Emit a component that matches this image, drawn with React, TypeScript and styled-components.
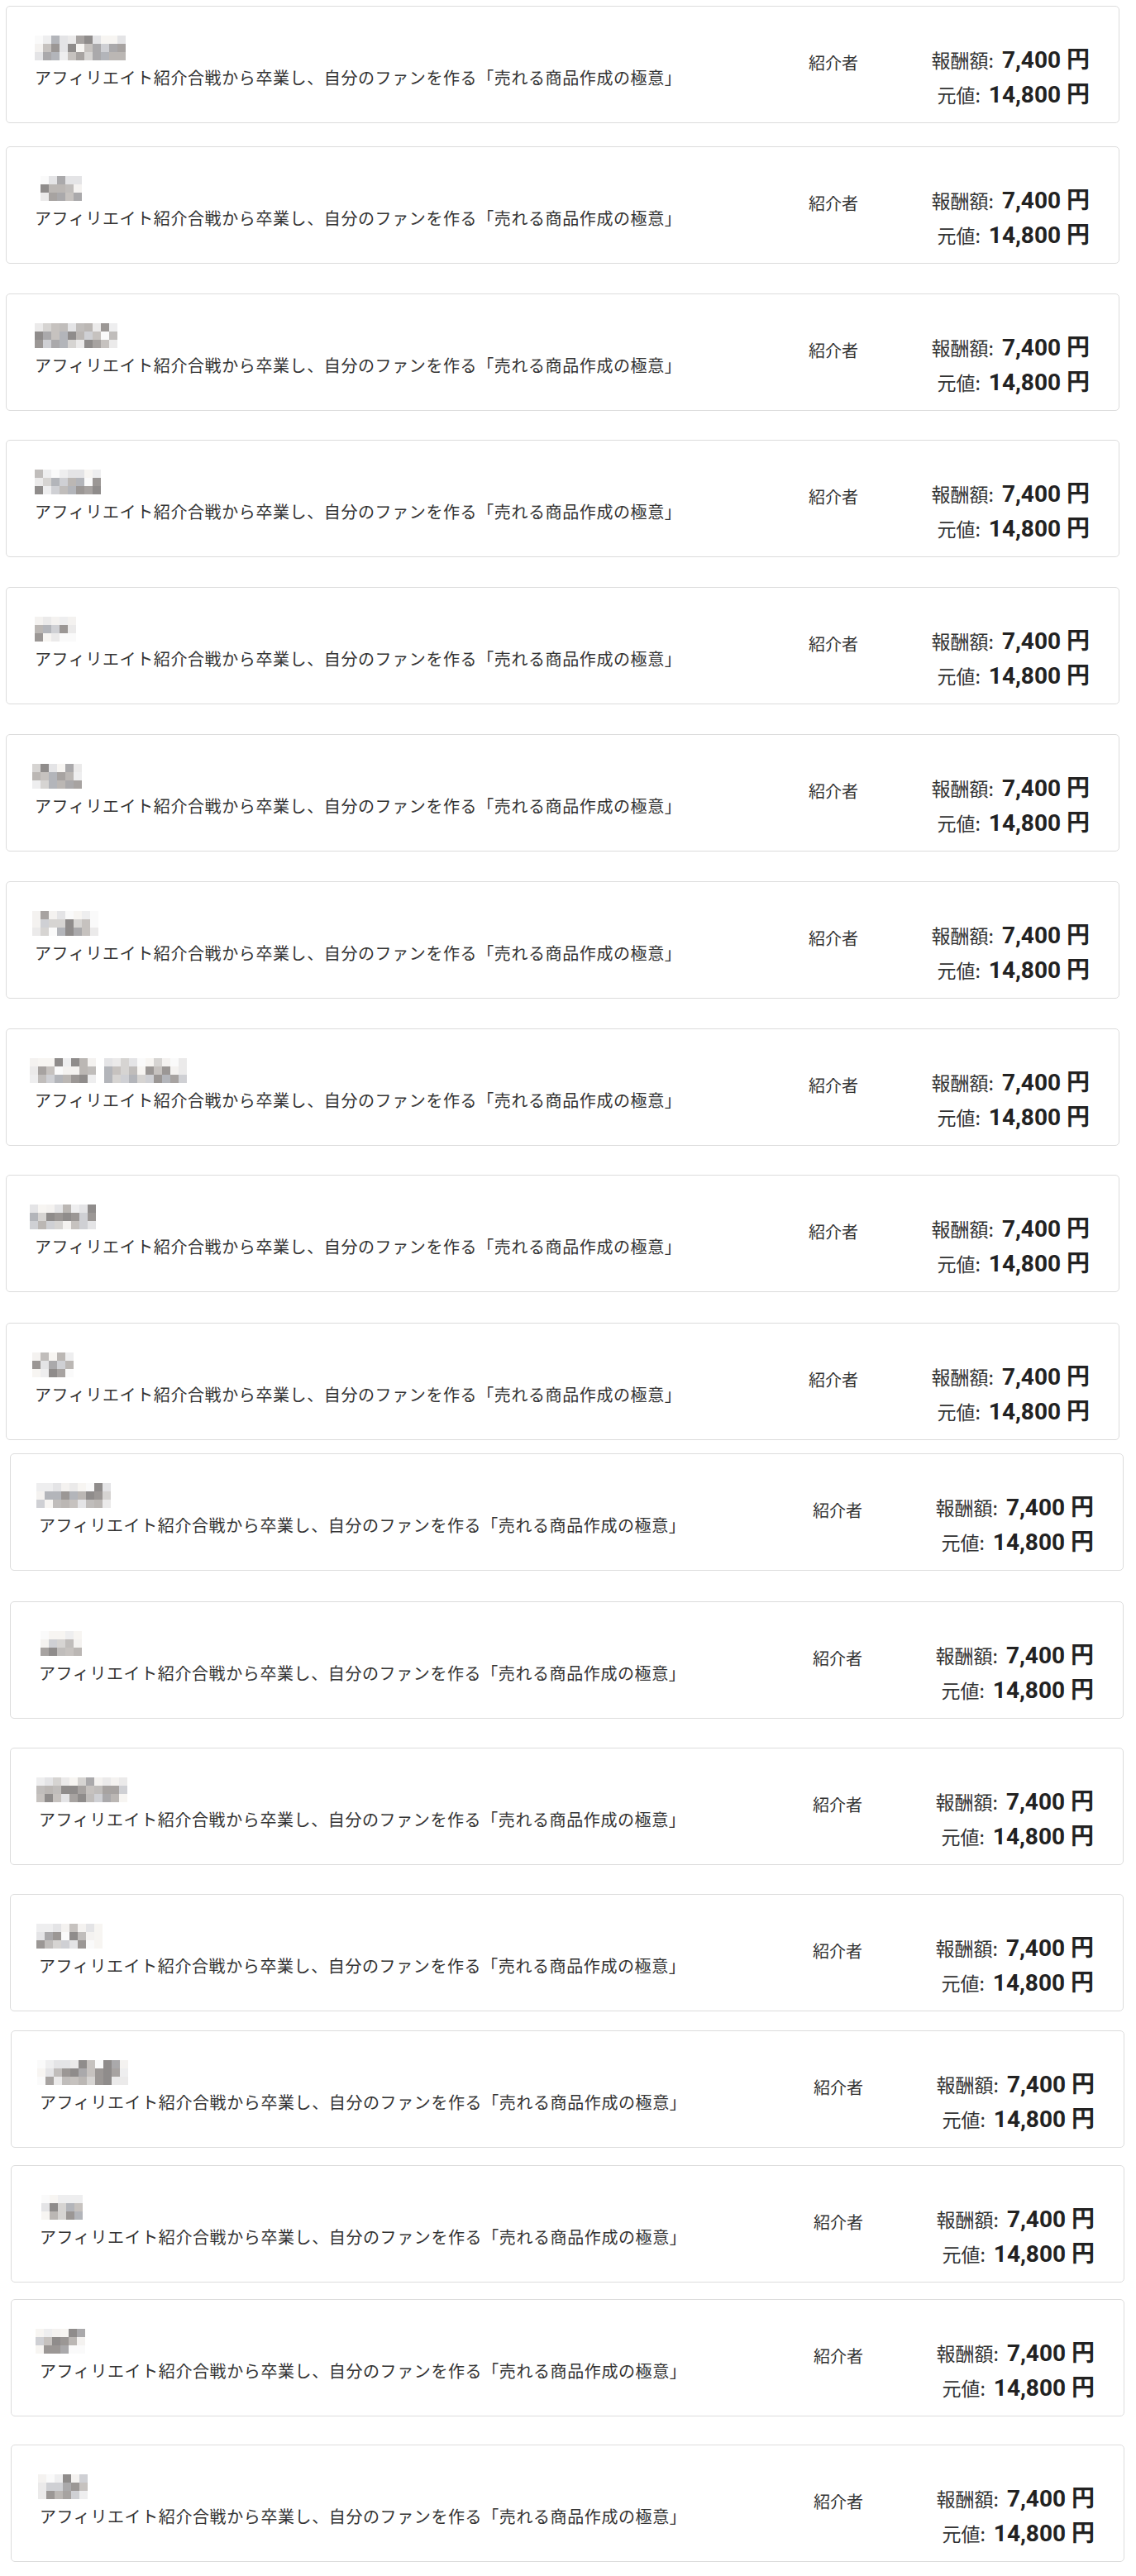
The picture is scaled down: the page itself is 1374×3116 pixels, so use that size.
import styled, { createGlobalStyle } from 'styled-components';

const GlobalStyle = createGlobalStyle`
  html, body {
    margin: 0;
    padding: 0;
    background: #fff;
  }
  body {
    font-family: "Noto Sans CJK JP", sans-serif;
    color: #333;
  }
`;

type Referral = {
  gap: number;
  indent: number;
  cols: number;
  shift: number;
  seed: number;
  split?: number;
};

// gaps / indents follow the stitched screenshot, which drifts a little
const referrals: Referral[] = [
  { gap: 7, indent: 7, cols: 11, shift: 0, seed: 11 },
  { gap: 28, indent: 7, cols: 5, shift: 7, seed: 23 },
  { gap: 36, indent: 7, cols: 10, shift: 0, seed: 37 },
  { gap: 35, indent: 7, cols: 8, shift: 0, seed: 41 },
  { gap: 36, indent: 7, cols: 5, shift: 0, seed: 53 },
  { gap: 36, indent: 7, cols: 6, shift: -3, seed: 67 },
  { gap: 36, indent: 7, cols: 8, shift: -3, seed: 71 },
  { gap: 36, indent: 7, cols: 19, shift: -6, seed: 83, split: 8 },
  { gap: 35, indent: 7, cols: 8, shift: -6, seed: 97 },
  { gap: 37, indent: 7, cols: 5, shift: -3, seed: 101 },
  { gap: 16, indent: 12, cols: 9, shift: -3, seed: 113 },
  { gap: 37, indent: 12, cols: 5, shift: 2, seed: 127 },
  { gap: 35, indent: 12, cols: 11, shift: -3, seed: 131 },
  { gap: 35, indent: 12, cols: 8, shift: -3, seed: 149 },
  { gap: 23, indent: 13, cols: 11, shift: -3, seed: 157 },
  { gap: 21, indent: 13, cols: 5, shift: 2, seed: 163 },
  { gap: 20, indent: 13, cols: 6, shift: -5, seed: 179 },
  { gap: 34, indent: 13, cols: 6, shift: -2, seed: 181 },
];

const TITLE = 'アフィリエイト紹介合戦から卒業し、自分のファンを作る「売れる商品作成の極意」';

const solid = ['#a7a3a1', '#bbb7b4', '#cfd0d4', '#c6c2bf', '#9b9795', '#b3b5ba', '#8f8c8b', '#d6d4d2', '#aaa9ab', '#c0bdbb'];
const faint = ['#f4f2f0', '#eeeeef', '#f7f5f2', '#ebeaea', '#e4e4e6', '#fafafa'];

const makeRandom = (seed: number) => {
  let s = seed;
  return () => {
    s = (s * 9301 + 49297) % 233280;
    return s / 233280;
  };
};

const Page = styled.main`
  display: flex;
  flex-direction: column;
  padding-bottom: 17px;
`;

const Card = styled.article<{ $gap: number; $indent: number }>`
  box-sizing: border-box;
  width: 1347px;
  height: 142px;
  margin: ${(p) => p.$gap}px 0 0 ${(p) => p.$indent}px;
  padding: 0 35px 0 34px;
  border: 1px solid #dcdcdc;
  border-radius: 5px;
  background: #fff;
  display: grid;
  grid-template-columns: 1fr 150px 190px;
  align-items: start;
`;

const Info = styled.div`
  padding-top: 35px;
  min-width: 0;
`;

const NameBlur = styled.svg<{ $shift: number }>`
  display: block;
  height: 30px;
  margin-left: ${(p) => p.$shift}px;
`;

const Title = styled.p`
  margin: 6px 0 0;
  font-size: 20px;
  line-height: 30px;
  letter-spacing: 0.6px;
  color: #333;
  white-space: nowrap;
`;

const Role = styled.div`
  padding-top: 53px;
  font-size: 20px;
  line-height: 30px;
  color: #333;
`;

const Prices = styled.div`
  padding-top: 43px;
  display: flex;
  flex-direction: column;
  align-items: flex-end;
`;

const PriceRow = styled.div`
  display: flex;
  align-items: baseline;
  gap: 10px;
  height: 42px;
  line-height: 42px;
  white-space: nowrap;
`;

const Label = styled.span`
  font-size: 23px;
  color: #333;
`;

const Amount = styled.span`
  font-family: Roboto, "Noto Sans CJK JP", sans-serif;
  font-weight: 700;
  font-size: 28px;
  color: #222;
`;

const Mosaic = ({ cols, seed, shift, split }: { cols: number; seed: number; shift: number; split?: number }) => {
  const rnd = makeRandom(seed);
  const cells: { x: number; y: number; c: string }[] = [];
  for (let x = 0; x < cols; x++) {
    if (split !== undefined && x === split) continue;
    for (let y = 0; y < 3; y++) {
      const edge = x === 0 || x === cols - 1;
      const r = rnd();
      let c: string;
      if (y === 0) c = r < 0.75 ? faint[Math.floor(rnd() * faint.length)] : solid[Math.floor(rnd() * solid.length)];
      else if (edge && r < 0.6) c = faint[Math.floor(rnd() * faint.length)];
      else if (r < 0.15) c = faint[Math.floor(rnd() * faint.length)];
      else c = solid[Math.floor(rnd() * solid.length)];
      cells.push({ x, y, c });
    }
  }
  return (
    <NameBlur $shift={shift} width={cols * 10} viewBox={`0 0 ${cols * 10} 30`}>
      {cells.map((cell) => (
        <rect key={`${cell.x}-${cell.y}`} x={cell.x * 10} y={cell.y * 10} width={10} height={10} fill={cell.c} />
      ))}
    </NameBlur>
  );
};

export default function App() {
  return (
    <>
      <GlobalStyle />
      <Page>
        {referrals.map((r, i) => (
          <Card key={i} $gap={r.gap} $indent={r.indent}>
            <Info>
              <Mosaic cols={r.cols} seed={r.seed} shift={r.shift} split={r.split} />
              <Title>{TITLE}</Title>
            </Info>
            <Role>紹介者</Role>
            <Prices>
              <PriceRow>
                <Label>報酬額:</Label>
                <Amount>7,400 円</Amount>
              </PriceRow>
              <PriceRow>
                <Label>元値:</Label>
                <Amount>14,800 円</Amount>
              </PriceRow>
            </Prices>
          </Card>
        ))}
      </Page>
    </>
  );
}
